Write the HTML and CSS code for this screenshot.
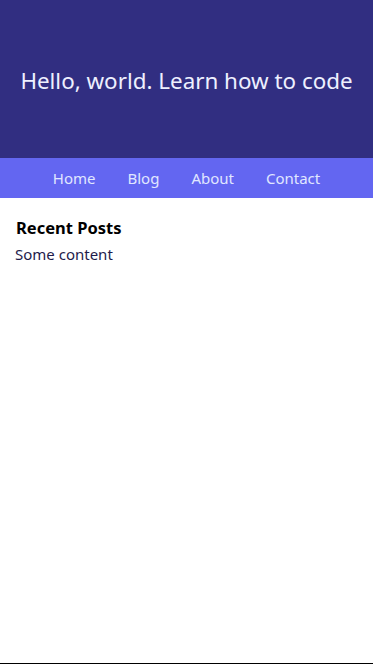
FILE: index.html
```html
<!DOCTYPE html>
<html lang="en">
<head>
    <meta charset="UTF-8">
    <meta name="viewport" content="width=device-width, initial-scale=1.0">
    <title>Hello, world</title>
    <link rel="stylesheet" href="styles.css">
</head>
<body>
    <header class="hero">
        <h1>Hello, world. Learn how to code</h1>
    </header>

    <nav class="main-nav">
        <a href="#">Home</a>
        <a href="#">Blog</a>
        <a href="#">About</a>
        <a href="#">Contact</a>
    </nav>

    <main class="content">
        <h2>Recent Posts</h2>
        <p>Some content</p>
    </main>

    <footer class="site-footer"></footer>
</body>
</html>
```

FILE: styles.css
```css
* {
    margin: 0;
    padding: 0;
    box-sizing: border-box;
}

body {
    font-family: 'Noto Sans', 'Open Sans', sans-serif;
    min-height: 100vh;
    display: flex;
    flex-direction: column;
    background: #fff;
    color: #1e1b4b;
}

.hero {
    background: #312e81;
    height: 158px;
    display: flex;
    align-items: center;
    justify-content: center;
}

.hero h1 {
    color: #eef0ff;
    font-size: 22.4px;
    font-weight: 400;
    padding-top: 2px;
}

.main-nav {
    background: #6366f1;
    height: 40px;
    display: flex;
    align-items: center;
    justify-content: center;
    gap: 32px;
}

.main-nav a {
    color: #e0e7ff;
    text-decoration: none;
    font-size: 15px;
}

.content {
    flex: 1;
    padding: 18px 16px;
}

.content h2 {
    color: #000;
    font-size: 16.5px;
    font-weight: 700;
    line-height: 24px;
}

.content p {
    font-size: 15px;
    line-height: 22px;
    margin-top: 3px;
    margin-left: -1px;
}

.site-footer {
    border-top: 1px solid #000;
}
```
